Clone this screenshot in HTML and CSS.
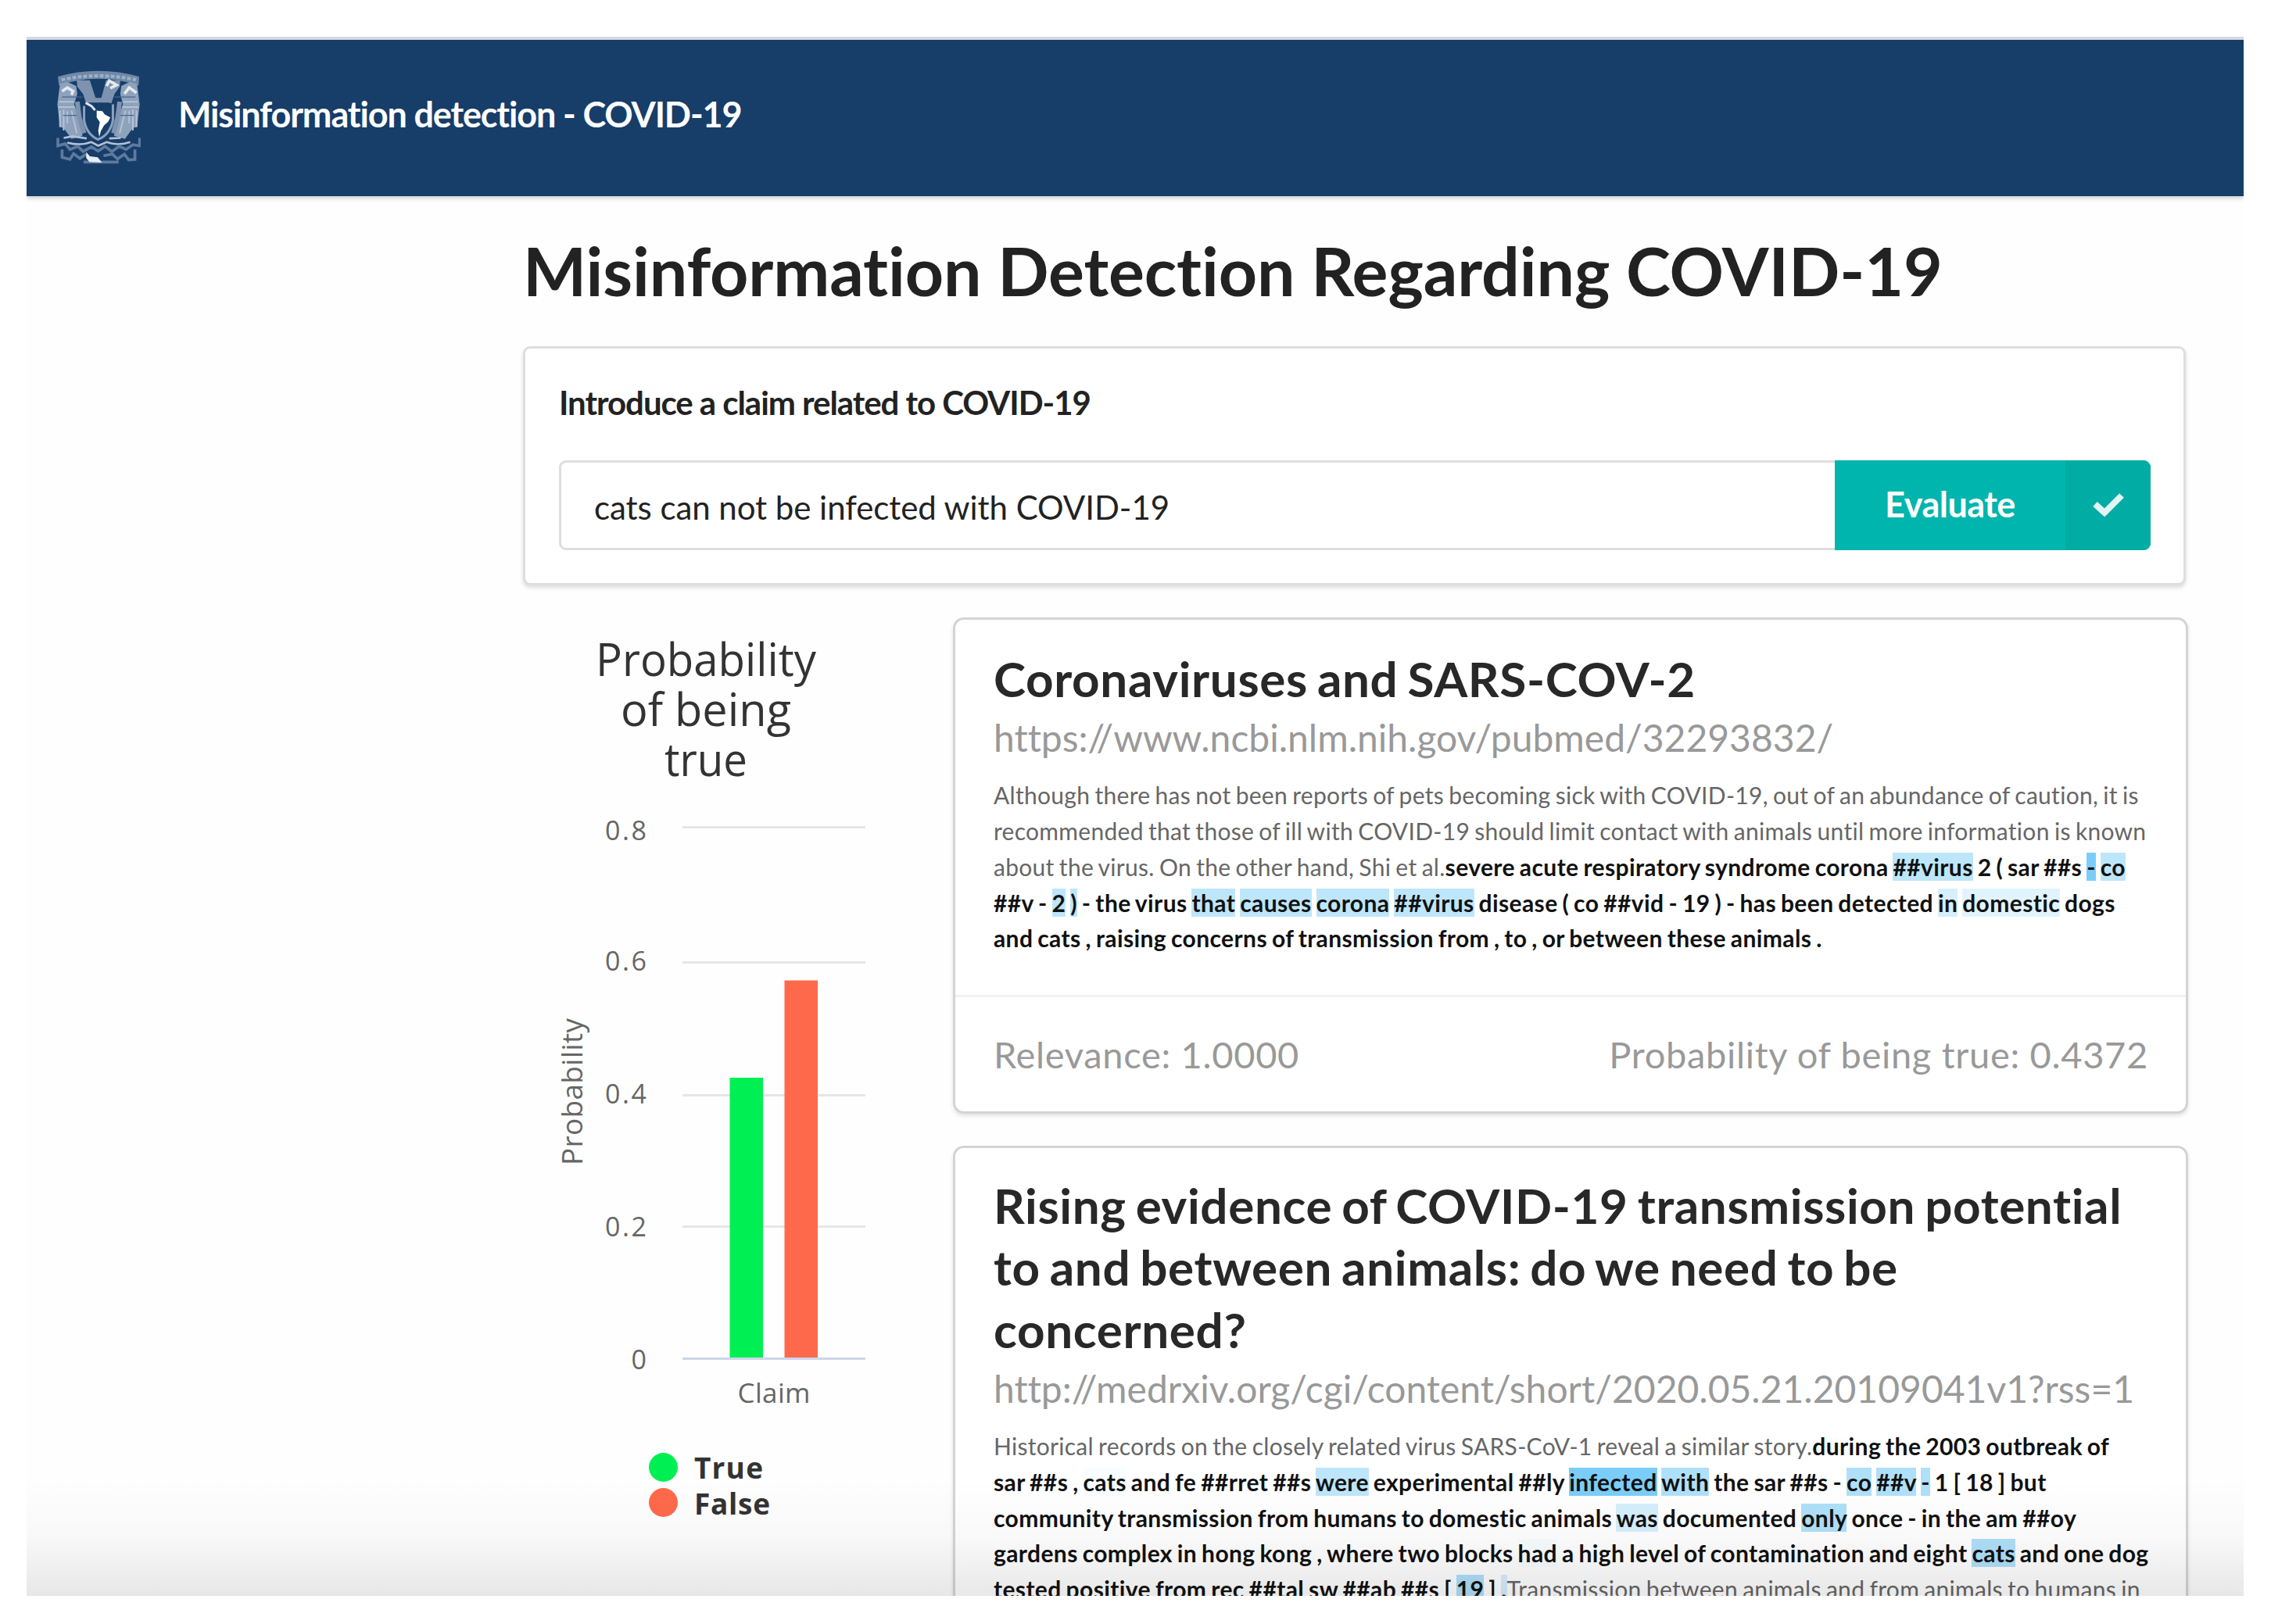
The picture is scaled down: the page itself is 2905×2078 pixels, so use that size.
FILE: index.html
```html
<!DOCTYPE html>
<html lang="en">
<head>
  <meta charset="UTF-8">
  <meta name="viewport" content="width=device-width, initial-scale=1.0">
  <title>Misinformation detection - COVID-19</title>
  <link rel="stylesheet" href="styles.css">
</head>
<body>

<div class="page">
  <header class="menu">
    <!-- University crest -->
    <svg class="logo" viewBox="72 60 318 358" fill="none" stroke="#b4c2d4">
      <path d="M76 84 Q150 62 230 62 Q310 62 386 84 L384 118 Q310 92 230 92 Q150 92 80 118 Z" fill="#7089a9" stroke="none"/>
      <path d="M90 96 Q230 66 374 96" stroke="#9fb0c6" stroke-width="12" stroke-dasharray="14 7"/>
      <path d="M84 112 L112 104 L146 120 L150 150 L138 190 L160 250 L170 310 L128 322 L98 280 L84 276 L74 190 Z" fill="#8ea2bc" stroke="none"/>
      <path d="M378 112 L350 104 L318 120 L314 150 L324 190 L304 250 L290 310 L332 322 L362 280 L378 276 L388 190 Z" fill="#8ea2bc" stroke="none"/>
      <path d="M148 98 L198 98 L222 172 L184 186 L172 150 L150 122 Z" fill="#7d93b0" stroke="none"/>
      <path d="M314 98 L260 98 L240 172 L280 186 L292 150 L312 122 Z" fill="#7d93b0" stroke="none"/>
      <path d="M92 140 L112 126 L134 140 L128 154 M330 150 L348 126 L376 146 M262 120 L272 100 L300 116 L276 128" stroke="#e3e9ef" stroke-width="11"/>
      <path d="M80 180 H136 M78 200 H140 M84 214 V276 M98 210 V290 M112 216 V262 M128 214 L148 300 M380 180 H326 M384 200 H322 M376 214 V276 M362 210 V290 M348 216 V262 M334 214 L312 300" stroke-width="6"/>
      <path d="M92 162 H170 M292 162 H372 M96 232 H150 M310 232 H366" stroke="#48668f" stroke-width="4"/>
      <path d="M150 180 L158 240 L176 300 M312 180 L304 240 L288 300 M182 174 H280" stroke="#7d93b0" stroke-width="18"/>
      <path d="M176 196 V250 Q186 306 230 324 Q276 304 286 250 V190" fill="#173d69" stroke="#8da1bb" stroke-width="9"/>
      <path d="M182 184 L204 196 L218 212" stroke="#dde4ec" stroke-width="9"/>
      <path d="M224 214 L246 216 L254 228 L276 240 L268 256 L252 270 L240 292 L234 314 L230 290 L236 258 L224 240 Z" fill="#fff" stroke="none"/>
      <path d="M98 318 L132 312 L186 320 M272 320 L316 318 M112 336 Q160 350 204 334 L230 348 L262 334 Q306 350 352 334" stroke-width="8"/>
      <path d="M76 318 V348 L104 340 L122 362 L152 350 L172 370 L204 352 L230 368 L256 350 L282 370 L310 350 L336 362 L362 344 L388 348 V318 M92 362 V392 L122 400 L136 378 L160 396 L184 380 M370 362 V400 L346 402 L330 380 L304 398 L284 380 L250 386 M174 410 H308" stroke="#5e7a9e" stroke-width="11"/>
      <path d="M184 372 L198 388 L228 392 L244 412 L196 410 L184 394 Z" fill="#e8edf2" stroke="none"/>
    </svg>
    <span class="menu-title">Misinformation detection - COVID-19</span>
  </header>

  <main class="container">
    <h1>Misinformation Detection Regarding COVID-19</h1>

    <form class="segment">
      <label for="claim">Introduce a claim related to COVID-19</label>
      <div class="claim-row">
        <input type="text" id="claim" value="cats can not be infected with COVID-19">
        <button type="button">
          <span class="button-text">Evaluate</span>
          <span class="button-icon">
            <svg viewBox="0 0 42 32"><path d="M4 16 L16 27 L38 5" fill="none" stroke="#e0f5f4" stroke-width="8"/></svg>
          </span>
        </button>
      </div>
    </form>

    <div class="columns">
      <!-- Probability chart -->
      <svg class="chart" width="550" height="1252" viewBox="669 790 550 1252">
        <g class="chart-title">
          <text x="903" y="865" textLength="282" lengthAdjust="spacingAndGlyphs">Probability</text>
          <text x="903" y="929" textLength="218" lengthAdjust="spacingAndGlyphs">of being</text>
          <text x="903" y="993" textLength="106" lengthAdjust="spacingAndGlyphs">true</text>
        </g>
        <g class="grid">
          <path d="M873 1058.5H1107M873 1231.5H1107M873 1401.5H1107M873 1569.5H1107"/>
        </g>
        <g class="axis-labels">
          <text x="827" y="1075" textLength="53">0.8</text>
          <text x="827" y="1242" textLength="53">0.6</text>
          <text x="827" y="1412" textLength="53">0.4</text>
          <text x="827" y="1582" textLength="53">0.2</text>
          <text x="827" y="1752">0</text>
        </g>
        <text class="axis-title" transform="translate(745 1397) rotate(-90)" textLength="188">Probability</text>
        <rect x="933.5" y="1379" width="42.5" height="358" fill="#00f053"/>
        <rect x="1003.5" y="1254.5" width="42.5" height="482.5" fill="#ff694b"/>
        <path d="M873 1738.5H1107" stroke="#ccd6eb" stroke-width="3"/>
        <text class="category" x="990" y="1795" textLength="93">Claim</text>
        <g class="legend">
          <circle cx="848.5" cy="1877.5" r="18.5" fill="#00f053"/>
          <text x="888" y="1892" textLength="88">True</text>
          <circle cx="848.5" cy="1922.5" r="18.5" fill="#ff694b"/>
          <text x="888" y="1938" textLength="97">False</text>
        </g>
      </svg>

      <div class="cards">
        <article class="card">
          <div class="content">
            <h2>Coronaviruses and SARS-COV-2</h2>
            <div class="meta">https://www.ncbi.nlm.nih.gov/pubmed/32293832/</div>
            <p>Although there has not been reports of pets becoming sick with COVID-19, out of an abundance of caution, it is<br>
            recommended that those of ill with COVID-19 should limit contact with animals until more information is known<br>
            about the virus. On the other hand, Shi et al.<b>severe acute respiratory syndrome corona <mark class="m3">##virus</mark> 2 ( sar ##s <mark class="m5">-</mark> <mark class="m3">co</mark><br>
            ##v - <mark class="m3">2</mark> <mark class="m3">)</mark> - the virus <mark class="m3">that</mark> <mark class="m3">causes</mark> <mark class="m3">corona</mark> <mark class="m3">##virus</mark> disease ( co ##vid - 19 ) - has been detected <mark class="m2">in</mark> <mark class="m1">domestic</mark> dogs<br>
            and cats , raising concerns of transmission from , to , or between these animals .</b></p>
          </div>
          <div class="extra">
            <span>Relevance: 1.0000</span>
            <span>Probability of being true: 0.4372</span>
          </div>
        </article>

        <article class="card">
          <div class="content">
            <h2>Rising evidence of COVID-19 transmission potential<br>to and between animals: do we need to be<br>concerned?</h2>
            <div class="meta">http://medrxiv.org/cgi/content/short/2020.05.21.20109041v1?rss=1</div>
            <p>Historical records on the closely related virus SARS-CoV-1 reveal a similar story.<b>during the 2003 outbreak of<br>
            sar ##s , <mark class="m0">cats</mark> and fe ##rret ##s <mark class="m3">were</mark> experimental ##ly <mark class="m5">infected</mark> <mark class="m4">with</mark> the sar ##s - <mark class="m4">co</mark> <mark class="m4">##v</mark> <mark class="m4">-</mark> 1 [ 18 ] but<br>
            community transmission from humans to domestic animals <mark class="m2">was</mark> documented <mark class="m4">only</mark> once - in the am ##oy<br>
            gardens complex in hong kong , where two blocks <mark class="m0">had</mark> a high level of contamination and eight <mark class="m4">cats</mark> and one dog<br>
            tested positive from rec ##tal sw ##ab ##s [ <mark class="m4">19</mark> ] <mark class="m2">.</mark></b>Transmission between animals and from animals to humans in</p>
          </div>
        </article>
      </div>
    </div>
  </main>
  <div class="fade"></div>
</div>

</body>
</html>
```
FILE: styles.css
```css
* {
  box-sizing: border-box;
}

body {
  margin: 0;
  background: #fff;
  color: #222;
  font-family: Lato, "Liberation Sans", sans-serif;
  font-variant-ligatures: none;
}

.page {
  position: relative;
  width: 2836px;
  height: 1995px;
  margin: 47px 0 0 34px;
  border-top: 4px solid #d5d8dc;
  background: #fefefe;
  overflow: hidden;
}

/* Top bar */
.menu {
  display: flex;
  align-items: center;
  height: 200px;
  padding-left: 38px;
  background: #173d69;
  box-shadow: 0 3px 5px rgba(34, 36, 38, 0.2);
}

.logo {
  width: 108px;
  height: 120px;
  margin: 0 48px 3px 0;
}

.menu-title {
  color: #fff;
  font-size: 45px;
  font-weight: 700;
  letter-spacing: -1.14px;
  padding-bottom: 11px;
}

.container {
  width: 2130px;
  margin-left: 635px;
  padding-top: 45px;
}

h1 {
  margin: 0 0 47px;
  font-size: 86px;
  line-height: 100px;
  font-weight: 700;
  letter-spacing: -0.1px;
  white-space: nowrap;
}

/* Claim form */
.segment {
  width: 2127px;
  height: 306px;
  padding: 44px 42px 0 43px;
  border: 3px solid #dededf;
  border-radius: 9px;
  background: #fff;
  box-shadow: 0 3px 5px rgba(34, 36, 38, 0.15);
}

.segment label {
  display: block;
  margin-bottom: 49px;
  font-size: 42px;
  line-height: 50px;
  font-weight: 700;
  letter-spacing: -1.05px;
}

.claim-row {
  display: flex;
  height: 115px;
}

.claim-row input {
  flex: 1;
  min-width: 0;
  padding: 5px 42px 0;
  border: 3px solid #dededf;
  border-right: 0;
  border-radius: 9px 0 0 9px;
  background: #fff;
  color: #222;
  font-family: inherit;
  font-size: 42px;
  letter-spacing: -0.05px;
}

.claim-row button {
  display: flex;
  width: 404px;
  padding: 0;
  border: 0;
  border-radius: 0 9px 9px 0;
  background: #00b5ad;
  color: #fff;
  font-family: inherit;
  font-size: 45px;
  font-weight: 700;
  letter-spacing: -0.5px;
  overflow: hidden;
}

.button-text,
.button-icon {
  display: flex;
  align-items: center;
  justify-content: center;
  height: 100%;
  padding-bottom: 4px;
}

.button-text {
  width: 295px;
}

.button-icon {
  width: 109px;
  background: #00aca4;
}

.button-icon svg {
  width: 42px;
  height: 32px;
}

/* Results */
.columns {
  display: flex;
  margin-top: 41px;
}

.chart {
  flex: none;
  font-family: "Open Sans", "Noto Sans", sans-serif;
}

.chart-title {
  font-size: 58px;
  fill: #333;
  text-anchor: middle;
}

.grid {
  stroke: #e6e6e6;
  stroke-width: 3;
}

.axis-labels {
  font-size: 34px;
  fill: #666;
  text-anchor: end;
}

.axis-title {
  font-size: 37px;
  fill: #666;
  text-anchor: middle;
}

.category {
  font-size: 35px;
  fill: #666;
  text-anchor: middle;
}

.legend {
  font-size: 37px;
  font-weight: 700;
  fill: #333;
}

.cards {
  flex: none;
  width: 1580px;
}

.card {
  margin-bottom: 41px;
  border: 3px solid #d4d4d5;
  border-radius: 14px;
  background: #fff;
  box-shadow: 0 3px 5px rgba(34, 36, 38, 0.12);
}

.content {
  padding: 36px 0 49px 49px;
  white-space: nowrap;
}

.card + .card .content {
  padding-top: 34px;
}

.card h2 {
  margin: 0;
  color: #282828;
  font-size: 62px;
  line-height: 79.4px;
  font-weight: 700;
  letter-spacing: 0.63px;
  word-spacing: -3.7px;
}

.meta {
  height: 71px;
  padding-top: 1px;
  color: #999;
  font-size: 48px;
  line-height: 70px;
}

.card p {
  margin: 16px 0 0;
  color: #666;
  font-size: 30px;
  line-height: 45.7px;
  letter-spacing: 0.29px;
  word-spacing: -1.75px;
}

.card b {
  color: #111;
  font-weight: 700;
  letter-spacing: 0.39px;
}

/* Attention weight, light to strong */
mark {
  color: inherit;
}

.m0 { background: #f8fdff; }
.m1 { background: #e1f4fe; }
.m2 { background: #d6effd; }
.m3 { background: #bde6fb; }
.m4 { background: #afe0fa; }
.m5 { background: #7bcdf9; }

.extra {
  display: flex;
  align-items: center;
  justify-content: space-between;
  height: 149px;
  padding: 0 48px 0 49px;
  border-top: 3px solid #f0f0f0;
  color: #999;
  font-size: 47px;
  letter-spacing: 0.68px;
}

/* Shade along the bottom edge of the window */
.fade {
  position: absolute;
  left: 0;
  right: 0;
  bottom: 0;
  height: 150px;
  background: linear-gradient(rgba(0, 0, 0, 0), rgba(0, 0, 0, 0.025) 50%, rgba(0, 0, 0, 0.09));
}
```
